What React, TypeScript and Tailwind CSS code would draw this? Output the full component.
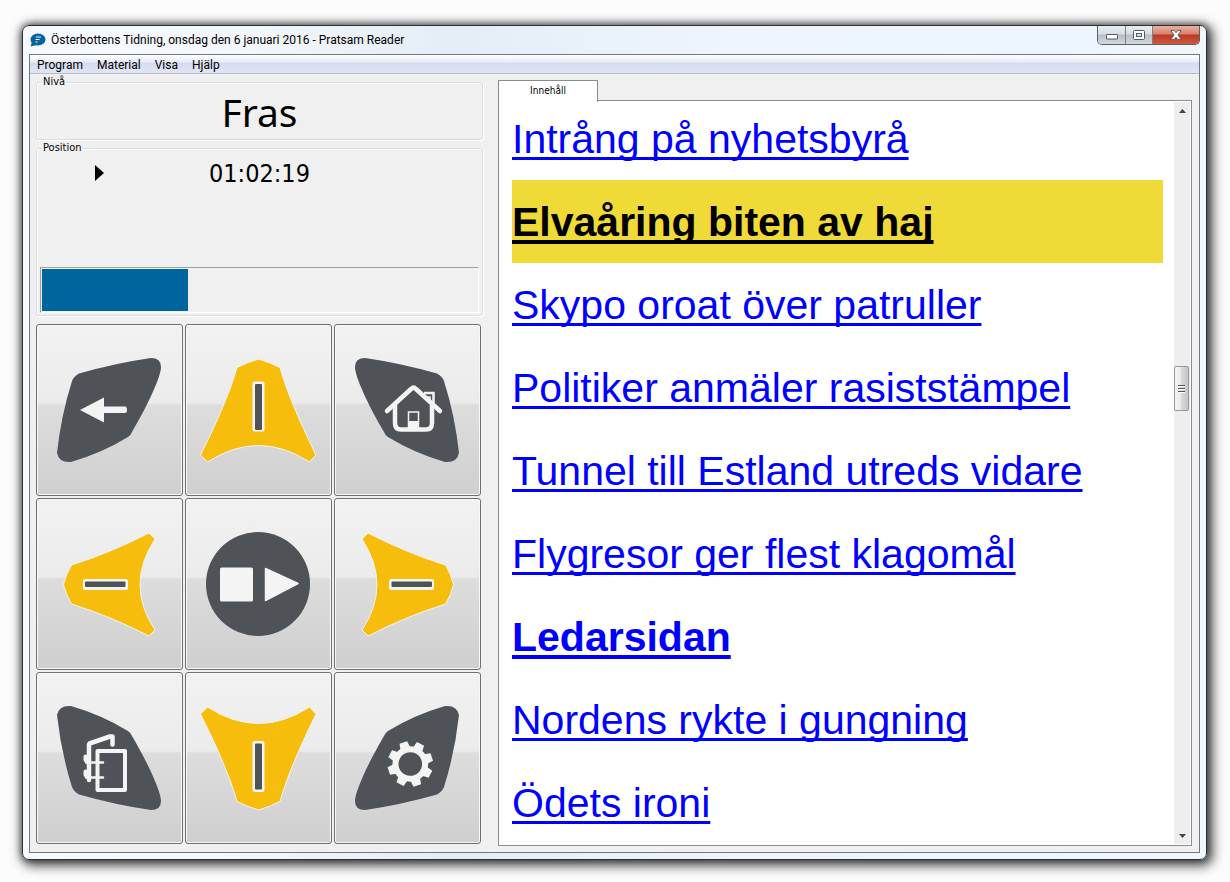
import type { ReactNode } from "react";

const SLATE = "#4f5257";
const PAPER = "#f4f4f4";
const GOLD = "#f6bd0d";

const LEAF =
  "M43 49.500 Q80 39 115 34 Q125 34 125 43 C125 52 113 79 96 108 Q95 111 92 113 Q66 129 35 138 Q23 139 21 129 Q25 92 36 57 Q38 52 43 49.500 Z";
const FIN_UP =
  "M73.500 35 Q84 38 95 43.500 Q104 76 131 131 L124.500 138 Q73.500 105 22.500 138 L15.500 131 Q43 76 52 43.500 Q63 38 73.500 35 Z";
const FIN_LEFT =
  "M27.500 86.500 Q30 76 35.500 67 Q74 55 113 35 L119 41 Q89 87 119 132 L113 138 Q74 118 35.500 106 Q30 97 27.500 86.500 Z";

const TEETH = [0, 45, 90, 135, 180, 225, 270, 315];

function Glyph({ children }: { children: ReactNode }) {
  return (
    <svg viewBox="1 1 145 170" className="h-full w-full" aria-hidden="true">
      {children}
    </svg>
  );
}

function BackIcon() {
  return (
    <Glyph>
      <path d={LEAF} fill={SLATE} />
      <path d="M44 86 L68 73.500 V82.500 H89 Q91 82.500 91 86 Q91 89 89 89 H68 V98.500 Z" fill={PAPER} />
    </Glyph>
  );
}

function HomeIcon() {
  return (
    <Glyph>
      <path d={LEAF} fill={SLATE} transform="translate(146 0) scale(-1 1)" />
      <g fill="none" stroke={PAPER}>
        <path d="M53 87 L77 65 Q79.500 62.500 82 65 L106 87" strokeWidth="4.500" strokeLinecap="round" />
        <path d="M61 81 V99 Q61 105.500 67 105.500 H92 Q98 105.500 98 99 V81" strokeWidth="4.500" />
        <path d="M90 69 H99.500 V82" strokeWidth="2.500" />
        <path d="M92 73 H96 V78" strokeWidth="1.500" />
        <path d="M74.500 104 V88 H84.500 V104" strokeWidth="1.500" />
      </g>
      <rect x="74" y="97" width="11" height="8" fill={PAPER} />
    </Glyph>
  );
}

function UpIcon() {
  return (
    <Glyph>
      <path d={FIN_UP} fill={GOLD} stroke={PAPER} />
      <rect x="67.500" y="57.500" width="12" height="50" rx="2" fill={PAPER} />
      <rect x="70" y="60" width="7" height="46" rx="1" fill={SLATE} />
    </Glyph>
  );
}

function DownIcon() {
  return (
    <Glyph>
      <path d={FIN_UP} fill={GOLD} stroke={PAPER} transform="translate(0 173) scale(1 -1)" />
      <rect x="67.500" y="69" width="12" height="51" rx="2" fill={PAPER} />
      <rect x="70" y="71.500" width="7" height="46" rx="1" fill={SLATE} />
    </Glyph>
  );
}

function LeftFin() {
  return (
    <>
      <path d={FIN_LEFT} fill={GOLD} stroke={PAPER} />
      <rect x="47" y="81" width="45" height="11" rx="2" fill={PAPER} />
      <rect x="49" y="83.500" width="40.500" height="5.500" rx="1" fill={SLATE} />
    </>
  );
}

function LeftIcon() {
  return (
    <Glyph>
      <LeftFin />
    </Glyph>
  );
}

function RightIcon() {
  return (
    <Glyph>
      <g transform="translate(147 0) scale(-1 1)">
        <LeftFin />
      </g>
    </Glyph>
  );
}

function PlayStopIcon() {
  return (
    <Glyph>
      <circle cx="73" cy="86" r="52" fill={SLATE} />
      <rect x="35" y="69.500" width="33" height="34" rx="1.500" fill={PAPER} />
      <path
        d="M80.500 70.500 L113 85.500 L80.500 102.500 Z"
        fill={PAPER}
        stroke={PAPER}
        strokeWidth="1.500"
        strokeLinejoin="round"
      />
    </Glyph>
  );
}

function DoorIcon() {
  return (
    <Glyph>
      <path d={LEAF} fill={SLATE} transform="translate(0 172) scale(1 -1)" />
      <g fill="none" stroke={PAPER} strokeLinecap="round" strokeLinejoin="round">
        <path d="M61.500 79 H89 V118 H61.500 Z" strokeWidth="4" />
        <path d="M53 108 V73 Q53 71.500 55 71 L74 64.500 H76.500 V72.500" strokeWidth="4.500" />
        <path d="M50 90.500 H67 M50 105.500 H67" strokeWidth="2.500" />
        <path d="M49.500 84.500 V88 M49.500 99.500 V103" strokeWidth="4" />
      </g>
    </Glyph>
  );
}

function GearIcon() {
  return (
    <Glyph>
      <path d={LEAF} fill={SLATE} transform="translate(146 172) scale(-1 -1)" />
      <g transform="translate(76.300 92) rotate(-18)">
        <circle r="14.800" fill="none" stroke={PAPER} strokeWidth="6" />
        {TEETH.map((angle) => (
          <path key={angle} d="M-5 -16 L-4 -22.600 H4 L5 -16 Z" fill={PAPER} transform={`rotate(${angle})`} />
        ))}
      </g>
    </Glyph>
  );
}

const PAD = [
  { label: "Tillbaka", icon: <BackIcon /> },
  { label: "Upp", icon: <UpIcon /> },
  { label: "Hem", icon: <HomeIcon /> },
  { label: "Vänster", icon: <LeftIcon /> },
  { label: "Spela eller stoppa", icon: <PlayStopIcon /> },
  { label: "Höger", icon: <RightIcon /> },
  { label: "Avsluta", icon: <DoorIcon /> },
  { label: "Ner", icon: <DownIcon /> },
  { label: "Inställningar", icon: <GearIcon /> },
];

const HEADLINES = [
  { text: "Intrång på nyhetsbyrå" },
  { text: "Elvaåring biten av haj", current: true },
  { text: "Skypo oroat över patruller" },
  { text: "Politiker anmäler rasiststämpel" },
  { text: "Tunnel till Estland utreds vidare" },
  { text: "Flygresor ger flest klagomål" },
  { text: "Ledarsidan", section: true },
  { text: "Nordens rykte i gungning" },
  { text: "Ödets ironi" },
];

function TitleBar() {
  return (
    <header className="flex h-7 items-start justify-between pl-[7px] pr-1.5">
      <div className="flex h-7 items-center gap-[5px]">
        <svg viewBox="0 0 16 14" className="h-3.5 w-4" aria-hidden="true">
          <ellipse cx="8" cy="6.500" rx="7.500" ry="6" fill="#06639d" />
          <path d="M2 9 L0.500 13.500 L7 12 Z" fill="#06639d" />
          <path d="M6 4 H11 M5.500 6.500 H9.500 M5.500 9 H7.500" stroke="#e8f3fa" strokeWidth="1.200" />
        </svg>
        <h1 className="whitespace-nowrap font-[Roboto,sans-serif] text-[12px] leading-4 text-black">
          Österbottens Tidning, onsdag den 6 januari 2016 - Pratsam Reader
        </h1>
      </div>
      <div className="flex h-[19px] overflow-hidden rounded-b-[5px] border border-t-0 border-[#5b616b]">
        <button
          aria-label="Minimera"
          className="flex w-7 items-center justify-center border-r border-[#7b828d] bg-[linear-gradient(#e9ecf0_0%,#d9dce1_45%,#b9bdc5_50%,#d3d7de_100%)]"
        >
          <svg viewBox="0 0 12 6" className="mt-1 h-1.5 w-3" aria-hidden="true">
            <rect x="0.500" y="0.500" width="11" height="4.500" rx="0.500" fill="#fff" stroke="#555a6c" />
          </svg>
        </button>
        <button
          aria-label="Maximera"
          className="flex w-[27px] items-center justify-center border-r border-[#7b828d] bg-[linear-gradient(#e9ecf0_0%,#d9dce1_45%,#b9bdc5_50%,#d3d7de_100%)]"
        >
          <svg viewBox="0 0 12 10" className="h-2.5 w-3" aria-hidden="true">
            <rect x="0.500" y="0.500" width="11" height="9" rx="1" fill="#fff" stroke="#555a6c" />
            <rect x="3.500" y="3.500" width="5" height="3" fill="#dfe2e8" stroke="#555a6c" />
          </svg>
        </button>
        <button
          aria-label="Stäng"
          className="flex w-[46px] items-center justify-center bg-[linear-gradient(#eab0a2_0%,#d8806e_45%,#bb3821_50%,#d0593f_100%)]"
        >
          <svg viewBox="0 0 12 10" className="h-2.5 w-3" aria-hidden="true">
            <path
              d="M0.800 0.600 H4.200 L6 2.800 L7.800 0.600 H11.200 L7.900 5 L11.200 9.400 H7.800 L6 7.200 L4.200 9.400 H0.800 L4.100 5 Z"
              fill="#fff"
              stroke="#545467"
              strokeWidth="0.900"
            />
          </svg>
        </button>
      </div>
    </header>
  );
}

function MenuBar() {
  return (
    <nav className="flex h-[19px] items-center gap-3.5 border-b border-[#b6bccc] bg-[linear-gradient(#ffffff_0%,#e6eaf5_40%,#d5dbee_45%,#e1e6f6_100%)] px-[7px] pt-0.5">
      {["Program", "Material", "Visa", "Hjälp"].map((item) => (
        <button key={item} className="font-[Roboto,sans-serif] text-[12px] leading-4 text-black">
          {item}
        </button>
      ))}
    </nav>
  );
}

function Group({ title, children }: { title: string; children: ReactNode }) {
  return (
    <fieldset className="min-w-0 rounded-[3px] border border-[#d5dfe5] px-[3px] shadow-[inset_1px_1px_0_#fff,1px_1px_0_#fff]">
      <legend className="ml-0.5 px-px font-['DejaVu_Sans_Condensed','DejaVu_Sans',sans-serif] text-[11px] leading-3 text-black">
        {title}
      </legend>
      {children}
    </fieldset>
  );
}

function ControlPanel() {
  return (
    <section className="flex w-[447px] shrink-0 flex-col pb-0.5 pt-0.5">
      <Group title="Nivå">
        <output className="block h-[51px] text-center font-['Noto_Sans',sans-serif] text-[39px] leading-[48px] text-black">
          Fras
        </output>
      </Group>
      <div className="mt-0.5">
        <Group title="Position">
          <div className="relative h-[113px] pt-1">
            <svg viewBox="0 0 9 16" className="absolute left-[55px] top-[11px] h-4 w-[9px]" aria-hidden="true">
              <path d="M0 0 L9 8 L0 16 Z" fill="#000" />
            </svg>
            <time className="block text-center font-['DejaVu_Sans_Condensed','DejaVu_Sans',sans-serif] text-[25px] leading-8 text-black">
              01:02:19
            </time>
          </div>
          <div
            role="progressbar"
            aria-label="Position"
            aria-valuenow={34}
            className="mb-0.5 h-[46px] border border-b-white border-l-[#a0a0a0] border-r-white border-t-[#a0a0a0] p-px"
          >
            <div className="h-full bg-[#00659c]" style={{ width: "33.6%" }} />
          </div>
        </Group>
      </div>
      <div className="mt-2 grid min-h-[520px] w-[445px] flex-1 grid-cols-3 grid-rows-3 gap-0.5">
        {PAD.map((key) => (
          <button
            key={key.label}
            aria-label={key.label}
            className="min-h-0 rounded-[3px] border border-[#707070] bg-[linear-gradient(#f2f2f2_0%,#ebebeb_46%,#dddddd_47%,#cfcfcf_100%)] shadow-[inset_0_0_0_1px_#f8f8f8]"
          >
            {key.icon}
          </button>
        ))}
      </div>
    </section>
  );
}

function ScrollBar() {
  return (
    <div className="my-px mr-px flex w-4 flex-col items-start bg-[#eeeeee]">
      <button aria-label="Rulla upp" className="flex h-[17px] w-full items-center justify-center">
        <svg viewBox="0 0 7 4" className="h-1 w-[7px]" aria-hidden="true">
          <path d="M0 4 L3.500 0 L7 4 Z" fill="#444" />
        </svg>
      </button>
      <div className="flex w-full flex-1 flex-col">
        <div className="grow-[247]" />
        <div className="flex h-[45px] w-[15px] flex-col items-center justify-center gap-px rounded-[2px] border border-[#979797] bg-[linear-gradient(90deg,#f5f5f5_0%,#e9e9eb_45%,#d9dadc_50%,#c4c5c8_100%)]">
          <span className="h-0.5 w-[7px] border-t border-[#555] bg-white" />
          <span className="h-0.5 w-[7px] border-t border-[#555] bg-white" />
          <span className="h-0.5 w-[7px] border-t border-[#555] bg-white" />
        </div>
        <div className="grow-[416]" />
      </div>
      <button aria-label="Rulla ner" className="flex h-[17px] w-full items-center justify-center">
        <svg viewBox="0 0 7 4" className="h-1 w-[7px]" aria-hidden="true">
          <path d="M0 0 L3.500 4 L7 0 Z" fill="#444" />
        </svg>
      </button>
    </div>
  );
}

function ContentPanel() {
  return (
    <section className="flex min-w-0 flex-1 flex-col pt-1.5">
      <div role="tablist" className="flex">
        <button
          role="tab"
          aria-selected="true"
          className="z-10 -mb-px h-[22px] w-[100px] border border-b-0 border-[#898c95] bg-white pb-0.5 font-['DejaVu_Sans_Condensed','DejaVu_Sans',sans-serif] text-[10px] leading-4 text-black"
        >
          Innehåll
        </button>
      </div>
      <div role="tabpanel" className="-mt-px flex min-h-0 flex-1 overflow-hidden border border-[#898c95] bg-white">
        <ul className="-mt-1 min-w-0 flex-1 pl-[13px] pr-[11px] font-['Liberation_Sans',Arial,sans-serif] text-[41px] leading-[81px]">
          {HEADLINES.map((item) => (
            <li key={item.text} className={item.current ? "bg-[#f0da38] pt-0.5" : "pt-0.5"}>
              <a
                href="#"
                className={
                  item.current
                    ? "whitespace-nowrap font-bold text-black underline decoration-[4px] underline-offset-[4px] [text-decoration-skip-ink:none]"
                    : item.section
                      ? "whitespace-nowrap font-bold text-[#0000ff] underline decoration-[4px] underline-offset-[4px] [text-decoration-skip-ink:none]"
                      : "whitespace-nowrap text-[#0000ff] underline decoration-[3px] underline-offset-[4px] [text-decoration-skip-ink:none]"
                }
              >
                {item.text}
              </a>
            </li>
          ))}
        </ul>
        <ScrollBar />
      </div>
    </section>
  );
}

export default function App() {
  return (
    <div className="flex min-h-screen flex-col bg-[#fcfcfc] pb-[22px] pl-[22px] pr-[23px] pt-[25px]">
      <main className="flex flex-1 flex-col rounded-[7px] border border-[#2b2f33] bg-[linear-gradient(90deg,#f6f9fd_0%,#f3f6fa_20%,#e4edf6_36%,#eef5fc_60%,#edf6fe_88%,#f1f6fb_100%)] shadow-[3px_3px_12px_3px_rgba(0,0,0,0.65),0_0_7px_1px_rgba(0,0,0,0.45)]">
        <TitleBar />
        <div className="mx-1.5 mb-1.5 flex flex-1 flex-col border border-[#73777f] bg-[#f0f0f0]">
          <MenuBar />
          <div className="flex flex-1 gap-[15px] pb-1.5 pl-1.5 pr-[7px]">
            <ControlPanel />
            <ContentPanel />
          </div>
        </div>
      </main>
    </div>
  );
}
